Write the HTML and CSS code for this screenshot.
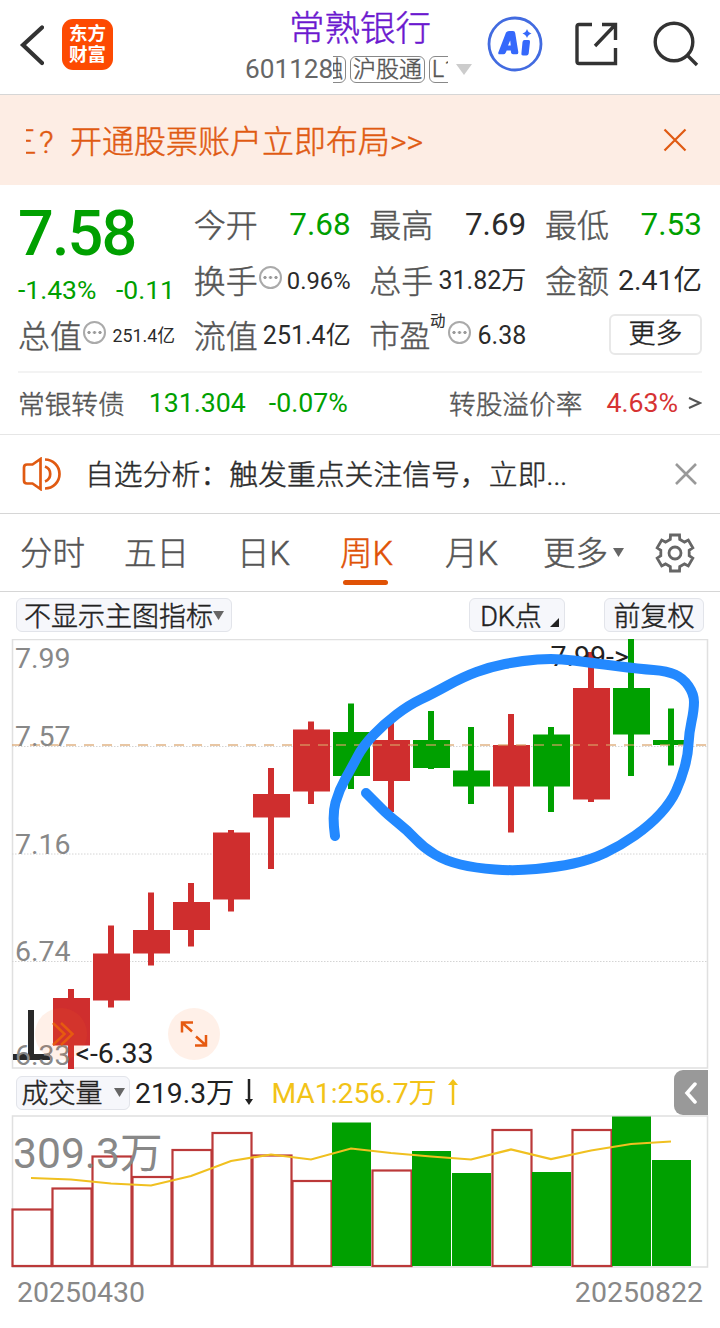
FILE: index.html
```html
<!DOCTYPE html>
<html lang="zh-CN">
<head>
    <meta charset="utf-8">
    <title>常熟银行 601128</title>
    <meta name="viewport" content="width=device-width, initial-scale=1">
    <link rel="stylesheet" href="styles.css">
</head>
<body>

    <header class="topbar">
        <div class="topleft">
            <svg class="back" width="26" height="44" viewBox="0 0 26 44"><path d="M24 4.500L5 22L24 40"/></svg>
            <div class="logo"><span>东方</span><span>财富</span></div>
        </div>
        <div class="stock">
            <div class="stockname">常熟银行</div>
            <div class="stockcode">
                <span class="code">601128</span>
                <div class="tags"><span class="tag cut">融</span><span class="tag">沪股通</span><span class="tag">L1</span></div>
                <svg width="16" height="11" viewBox="0 0 16 11"><path d="M0 0H16L8 11Z" fill="#ccc"/></svg>
            </div>
        </div>
        <div class="topicons">
            <svg width="56" height="56" viewBox="0 0 56 56">
                <circle cx="28" cy="28" r="26" fill="none" stroke="#426be0" stroke-width="2.8"/>
                <path fill="#3568fb" fill-rule="evenodd" d="M19 16.5Q20 15 22 15H26Q28 15 28.2 17L31.3 36Q31.5 38.3 29.5 38.3H26Q24.3 38.3 24 36.5L23.8 34.5H19.7L18.7 36.8Q18 38.3 16.3 38.3H13Q10.5 38.3 11.5 36ZM21 29.5H23.7L23.2 24.5Z"/>
                <path fill="#3568fb" d="M37.5 24H41.5Q43.4 24 43 26L41.7 37.5Q41.3 39.5 39.5 39.5H36Q34 39.5 34.4 37.5L35.5 26Q35.8 24 37.5 24ZM40 13Q41 16.5 44.5 17.5Q41 18.5 40 22Q39 18.5 35.5 17.5Q39 16.5 40 13Z"/>
            </svg>
            <svg class="line" width="46" height="46" viewBox="0 0 46 46">
                <path d="M18 3.500H5Q3 3.500 3 5.500V40.500Q3 42.500 5 42.500H41.500V27M28 3.500H41.500V19M41.500 3.500L21 25"/>
            </svg>
            <svg class="line" width="46" height="46" viewBox="0 0 46 46">
                <circle cx="21" cy="21" r="18.800"/><path d="M34 34L44 44"/>
            </svg>
        </div>
    </header>

    <div class="banner">
        <div class="marquee"><span class="slide">三</span><span class="ask">?</span>开通股票账户立即布局&gt;&gt;</div>
        <svg width="24" height="24" viewBox="0 0 24 24"><path d="M1.500 1.500L22.500 22.500M22.500 1.500L1.500 22.500"/></svg>
    </div>

    <section class="quote">
        <div class="grid">
            <div class="price">
                <div class="now">7.58</div>
                <div class="change"><span>-1.43%</span><span>-0.11</span></div>
            </div>
            <div class="cell"><label>今开</label><b class="v32 green">7.68</b></div>
            <div class="cell"><label>最高</label><b class="v32">7.69</b></div>
            <div class="cell"><label>最低</label><b class="v32 green">7.53</b></div>
            <div class="cell"><label>换手</label><i class="dots"></i><b class="v24">0.96%</b></div>
            <div class="cell"><label>总手</label><b class="v25">31.82万</b></div>
            <div class="cell"><label>金额</label><b class="v28">2.41亿</b></div>
            <div class="cell"><label>总值</label><i class="dots"></i><b class="v18">251.4亿</b></div>
            <div class="cell"><label>流值</label><b class="v25">251.4亿</b></div>
            <div class="cell"><label class="pe">市盈</label><small>动</small><i class="dots"></i><b class="v25">6.38</b></div>
            <div class="cell"><button class="more">更多</button></div>
        </div>
        <div class="bond">
            <span>常银转债</span>
            <span class="green num">131.304</span>
            <span class="green pct">-0.07%</span>
            <span class="rate">转股溢价率</span>
            <span class="red">4.63%</span>
            <svg width="14" height="14" viewBox="0 0 14 14"><path d="M1 2L12 7L1 12"/></svg>
        </div>
    </section>

    <div class="notice">
        <svg class="horn" width="40" height="34" viewBox="0 0 40 34">
            <path d="M18.500 2V32L10.500 26.500H5Q2 26.500 2 23.500V10.500Q2 7.500 5 7.500H10.500ZM23 9.500A8 8 0 0 1 23 24.500M23 2.500A14.500 14.500 0 0 1 23 31.500"/>
        </svg>
        <span>自选分析：触发重点关注信号，立即...</span>
        <svg class="close" width="22" height="22" viewBox="0 0 22 22"><path d="M1 1L21 21M21 1L1 21"/></svg>
    </div>

    <nav class="tabs">
        <span>分时</span>
        <span>五日</span>
        <span>日K</span>
        <span class="on">周K</span>
        <span>月K</span>
        <span>更多<svg class="arrow" width="11" height="9" viewBox="0 0 11 9"><path d="M0 0H11L5.500 9Z"/></svg></span>
        <svg class="gear" width="40" height="40" viewBox="0 0 40 40">
            <path id="gear"/>
            <circle cx="20" cy="20" r="6"/>
        </svg>
    </nav>

    <div class="chartbar">
        <div class="pill main"><span>不显示主图指标</span><svg class="arrow" width="11" height="9" viewBox="0 0 11 9"><path d="M0 0H11L5.500 9Z"/></svg></div>
        <div class="pill dk"><span>DK点</span><svg width="9" height="9" viewBox="0 0 9 9"><path d="M9 0V9H0Z" fill="#222"/></svg></div>
        <div class="pill fq"><span>前复权</span></div>
    </div>

    <!-- weekly candles -->
    <svg class="kline" width="720" height="431" viewBox="0 639 720 431">
        <path class="frame" d="M12.500 639.500H707.500V1068H12.500Z"/>
        <path class="dotted" d="M12 746.500H707M12 854H707M12 961.500H707"/>
        <g id="candles"></g>
        <path class="now-line" d="M12 745H707"/>
        <g class="scale">
            <text x="15" y="668">7.99</text>
            <text x="15" y="746">7.57</text>
            <text x="15" y="854">7.16</text>
            <text x="15" y="961">6.74</text>
            <text x="15" y="1064.500">6.33</text>
        </g>
        <text class="mark" x="550.500" y="665.500">7.99-&gt;</text>
        <text class="mark" x="75.500" y="1062.500">&lt;-6.33</text>
        <circle class="bubble" cx="61" cy="1034" r="26"/>
        <path class="orange" d="M53 1023L64.500 1034L53 1045M61 1023L72.500 1034L61 1045"/>
        <circle class="bubble" cx="194" cy="1034" r="26"/>
        <path class="orange" d="M182 1032.500V1022.500H193M182.500 1023L192 1031.500M195 1045.500H206V1035M205.500 1045L196 1036.500"/>
        <path id="pen"/>
    </svg>

    <div class="volbar">
        <div class="pill vol"><span>成交量</span><svg class="arrow" width="11" height="9" viewBox="0 0 11 9"><path d="M0 0H11L5.500 9Z"/></svg></div>
        <span class="amount">219.3万</span>
        <svg width="10" height="27" viewBox="0 0 10 27"><path d="M5 0V22" stroke="#222" stroke-width="2.500"/><path d="M1 20H9L5 26Z" fill="#222"/></svg>
        <span class="ma">MA1:256.7万</span>
        <svg width="10" height="27" viewBox="0 0 10 27"><path d="M5 4V26" stroke="#f2c318" stroke-width="2.500"/><path d="M0 6H10L5 0Z" fill="#f2c318"/></svg>
        <div class="fold"><svg width="14" height="22" viewBox="0 0 14 22"><path d="M11 2L3 11L11 20"/></svg></div>
    </div>

    <svg class="volume" width="720" height="154" viewBox="0 1115 720 154">
        <path class="frame" d="M12.500 1116H707.500V1267H12.500Z"/>
        <g id="bars"></g>
        <text class="peak" x="13" y="1168">309.3万</text>
        <polyline id="maline"/>
    </svg>

    <div class="dates"><span>20250430</span><span>20250822</span></div>

    <script>
        var RED = "#cf2e2e";
        var GREEN = "#00a000";

        // colour, high, top, bottom, low
        var candles = [
            ["#292929", 1010, 1054, 1060, 1058],
            [RED, 989, 998, 1045.5, 1069],
            [RED, 925.5, 953.5, 1000.5, 1007.5],
            [RED, 892.5, 930, 953.5, 965.5],
            [RED, 883, 902, 930, 946.5],
            [RED, 830, 832.5, 899.5, 911.5],
            [RED, 768, 794, 817.5, 869],
            [RED, 721.5, 729.5, 791.5, 804],
            [GREEN, 703.5, 732, 776, 789],
            [RED, 716.5, 740, 781, 812],
            [GREEN, 711, 740, 768, 769],
            [GREEN, 727, 770.5, 786.5, 804],
            [RED, 714, 745, 786.5, 832.5],
            [GREEN, 727, 734.5, 786.5, 812],
            [RED, 652, 688, 799.5, 802],
            [GREEN, 639, 688, 734.5, 776],
            [GREEN, 708.5, 740, 745, 765.5]
        ];
        var tops = [1209.5, 1188.5, 1156.5, 1177, 1150, 1133, 1155.5, 1181, 1122.5, 1170.5, 1151, 1173, 1130, 1172, 1130, 1116.5, 1160];
        var ma = [1178, 1179.5, 1183.5, 1185.5, 1176, 1161, 1154.5, 1159.5, 1148.5, 1153, 1156.5, 1159.5, 1149.5, 1159, 1150.5, 1144, 1141.5];

        var out = "", vol = "", line = "";
        for (var i = 0; i < candles.length; i++) {
            var c = candles[i];
            var x = 31 + i * 40;
            out += "<rect x='" + (x - 3) + "' y='" + c[1] + "' width='6' height='" + (c[4] - c[1]) + "' fill='" + c[0] + "'/>";
            out += "<rect x='" + (x - 18) + "' y='" + c[2] + "' width='37' height='" + (c[3] - c[2]) + "' fill='" + c[0] + "'/>";

            if (c[0] == GREEN) {
                vol += "<rect x='" + (x - 19) + "' y='" + tops[i] + "' width='39' height='" + (1266 - tops[i]) + "' fill='" + GREEN + "'/>";
            } else {
                vol += "<rect class='hollow' x='" + (x - 18.5) + "' y='" + tops[i] + "' width='39' height='" + (1266 - tops[i]) + "'/>";
            }
            line += x + "," + ma[i] + " ";
        }
        document.getElementById("candles").innerHTML = out;
        document.getElementById("bars").innerHTML = vol;
        document.getElementById("maline").setAttribute("points", line);

        // freehand circle, smoothed through the midpoints
        var pen = [[335, 836], [332, 815], [339, 790], [352, 767], [363, 746], [384, 724], [409, 705], [432, 694], [463, 677], [490, 667],
            [520, 661], [555, 658], [592, 663], [640, 669], [667, 671], [683, 678], [694, 694], [694, 710], [689, 733], [688, 755],
            [681, 780], [671, 802], [650, 825], [620, 846], [590, 860], [557, 867], [515, 871], [475, 868], [446, 861], [424, 848], [407, 830], [388, 815], [376, 803], [366, 793]];
        var d = "M" + pen[0];
        for (i = 1; i < pen.length - 1; i++) {
            d += "Q" + pen[i] + " " + (pen[i][0] + pen[i + 1][0]) / 2 + "," + (pen[i][1] + pen[i + 1][1]) / 2;
        }
        document.getElementById("pen").setAttribute("d", d + "L" + pen[pen.length - 1]);

        // settings gear, six teeth
        var g = "";
        for (i = 0; i < 6; i++) {
            [[-14, 18.5], [14, 18.5], [19, 14.5], [41, 14.5]].forEach(function (p) {
                var a = (i * 60 + p[0] - 90) * Math.PI / 180;
                g += (g ? "L" : "M") + (20 + p[1] * Math.cos(a)).toFixed(1) + " " + (20 + p[1] * Math.sin(a)).toFixed(1);
            });
        }
        document.getElementById("gear").setAttribute("d", g + "Z");
    </script>
</body>
</html>
```
FILE: styles.css
```css
* {
    box-sizing: border-box;
}
body {
    margin: 0;
    width: 720px;
    height: 1328px;
    overflow: hidden;
    background-color: #fff;
    font-family: Roboto, "Noto Sans CJK SC", sans-serif;
    color: #2b2b2b;
    white-space: nowrap;
}
svg {
    display: block;
    flex: none;
    fill: none;
}
.green { color: #00a000; }
.red { color: #d63333; }

/* light face is a bit too thin, thicken it slightly */
.stockname, .tag, .marquee, .cell label, .cell small, .more, .bond, .notice span, .tabs span, .pill {
    font-weight: 300;
    -webkit-text-stroke: .45px;
}

/* top bar */
.topbar {
    height: 95px;
    display: flex;
    border-bottom: 1px solid #d6d6d6;
}
.topleft {
    width: 245px;
    height: 89px;
    padding-left: 18px;
    display: flex;
    align-items: center;
    gap: 18px;
}
.back path {
    stroke: #333;
    stroke-width: 4.2;
    stroke-linecap: round;
}
.logo {
    width: 51px;
    height: 51px;
    border-radius: 11px;
    background-color: #fd4a02;
    color: #fff;
    font-weight: 700;
    font-size: 18.5px;
    line-height: 21px;
    display: flex;
    flex-direction: column;
    align-items: center;
    justify-content: center;
}
.stock {
    width: 227px;
}
.stockname {
    height: 54px;
    padding-left: 44px;
    font-size: 35.5px;
    line-height: 59px;
    color: #6b18cf;
}
.stockcode {
    height: 30px;
    display: flex;
    align-items: center;
}
.code {
    font-size: 26.2px;
    color: #666;
    width: 88px;
}
.tags {
    width: 115px;
    margin-right: 8px;
    overflow: hidden;
    display: flex;
    gap: 4px;
}
.tag {
    flex: none;
    height: 27px;
    padding: 0 2px;
    border: 1.5px solid #888;
    border-radius: 6px;
    font-size: 23px;
    line-height: 25px;
    color: #555;
}
.cut {
    margin-left: -16px;
}
.topicons {
    height: 88px;
    padding-left: 15px;
    display: flex;
    align-items: center;
    gap: 32px;
}
.line {
    stroke: #333;
    stroke-width: 3.4;
}
.topicons .line:nth-child(2) {
    margin: 0 1px 0 -1px;
}

/* ad banner */
.banner {
    height: 90px;
    background-color: #fdede4;
    padding: 0 33px 0 26px;
    display: flex;
    align-items: center;
    justify-content: space-between;
    color: #e05a12;
    font-size: 32px;
    line-height: 46px;
}
.marquee {
    overflow: hidden;
    margin-top: 4px;
}
.slide {
    margin-left: -21px;
}
.ask {
    display: inline-block;
    width: 33px;
    padding-left: 2px;
}
.banner path {
    stroke: #e05a12;
    stroke-width: 2.2;
}

/* quote */
.quote {
    height: 250px;
    padding: 11px 18px 0;
    border-bottom: 1px solid #e6e6e6;
}
.grid {
    height: 177px;
    display: grid;
    grid-template-columns: repeat(4, 157px);
    grid-template-rows: 56px 56px 54px;
    column-gap: 18.67px;
    border-bottom: 2px solid #f3f3f3;
}
.price {
    grid-row: span 2;
    color: #00a000;
}
.now {
    font-size: 63px;
    line-height: 76px;
    font-weight: 500;
    letter-spacing: -1.9px;
}
.change {
    display: flex;
    justify-content: space-between;
    font-size: 26.5px;
    line-height: 35px;
}
.cell {
    display: flex;
    align-items: center;
    line-height: 56px;
}
.cell label {
    font-size: 32px;
    color: #555;
    padding-top: 3px;
}
.cell .pe {
    font-size: 30.5px;
}
.cell small {
    font-size: 15px;
    line-height: 16px;
    align-self: flex-start;
    margin-top: 5px;
    margin-right: 2px;
}
.cell b {
    margin-left: auto;
    padding-top: 1px;
    font-weight: 400;
}
.v32 { font-size: 31.5px; }
.v28 { font-size: 28.5px; }
.v25 { font-size: 25px; }
.v24 { font-size: 23.8px; }
.v18 { font-size: 17.8px; }
.dots {
    width: 23px;
    height: 23px;
    margin-top: -5px;
    margin-left: 1px;
    border: 2px solid #aaa;
    border-radius: 50%;
    background: radial-gradient(circle, #999 1.3px, transparent 1.8px) 50% 50% / 5.5px 19px;
    background-clip: content-box;
    padding: 0 1px;
    flex: none;
}
.more {
    width: 93px;
    height: 41px;
    margin-left: auto;
    margin-top: -2px;
    padding: 0;
    border: 2px solid #e8e8e8;
    border-radius: 6px;
    background-color: #fff;
    font-family: inherit;
    font-size: 27px;
    line-height: 37px;
    color: #222;
}
.bond {
    height: 59px;
    display: flex;
    align-items: center;
    font-size: 26.7px;
    color: #555;
}
.bond .green, .bond .red {
    font-weight: 400;
    -webkit-text-stroke: 0;
}
.num { margin-left: 24px; }
.pct { margin-left: 23px; }
.rate {
    margin-left: auto;
    margin-right: 24px;
}
.bond svg {
    margin-left: 10px;
    stroke: #555;
    stroke-width: 2;
}

/* notice */
.notice {
    height: 79px;
    padding: 0 23px 0 22px;
    border-bottom: 1px solid #d6d6d6;
    display: flex;
    align-items: center;
    font-size: 28.85px;
}
.notice span {
    margin-left: 23px;
    margin-top: -4px;
}
.horn {
    stroke: #e05a12;
    stroke-width: 2.7;
}
.close {
    margin-left: auto;
    stroke: #999;
    stroke-width: 2.6;
}

/* period tabs */
.tabs {
    height: 78px;
    padding-left: 20px;
    border-bottom: 1px solid #d6d6d6;
    display: grid;
    grid-template-columns: 104px 113px 103px 105px 98px 112px 1fr;
    align-items: center;
    font-size: 32.5px;
    color: #555;
}
.tabs span {
    height: 77px;
    line-height: 81px;
}
.tabs .on {
    color: #e05206;
}
.tabs .on::after {
    content: "";
    display: block;
    width: 45px;
    height: 5px;
    margin: -15px 0 0 3px;
    border-radius: 3px;
    background-color: #e05206;
}
.arrow {
    display: inline-block;
    fill: #666;
}
.tabs .arrow {
    margin-left: 5px;
    vertical-align: 8px;
}
.gear {
    stroke: #666;
    stroke-width: 2.8;
}

/* chart tool bars */
.chartbar {
    height: 47px;
    padding: 6px 16px 0;
    display: flex;
}
.pill {
    height: 34px;
    border: 1.5px solid #e2e4ea;
    border-radius: 6px;
    background-color: #f6f7fb;
    font-size: 27px;
    line-height: 32px;
    color: #222;
    display: flex;
    align-items: center;
    justify-content: center;
}
.pill span {
    padding-top: 3px;
}
.main {
    width: 216px;
}
.dk {
    width: 96px;
    margin-left: auto;
    margin-right: 39px;
    padding-left: 5px;
}
.dk svg {
    margin-left: 8px;
    margin-top: 15px;
}
.fq {
    width: 100px;
}
.frame {
    stroke: #e0e0e0;
    stroke-width: 1.5;
}
.dotted {
    stroke: #d4d4d4;
    stroke-width: 1;
    stroke-dasharray: 1.5 1.5;
}
.now-line {
    stroke: #d9a066;
    stroke-opacity: .6;
    stroke-width: 2;
    stroke-dasharray: 10 8;
}
.scale, .mark {
    font-size: 28.5px;
    fill: #888;
}
.mark {
    fill: #222;
}
.bubble {
    fill: #ff6a1a;
    fill-opacity: .1;
}
.orange {
    stroke: #e65a10;
    stroke-width: 2.5;
}
#pen {
    stroke: #2389ff;
    stroke-width: 10;
    stroke-linecap: round;
    stroke-linejoin: round;
}
.volbar {
    height: 45px;
    padding-left: 16px;
    padding-right: 12px;
    display: flex;
    align-items: center;
    font-size: 28.3px;
}
.vol {
    width: 114px;
}
.vol .arrow {
    margin-left: 11px;
}
.amount {
    margin: -4px 10px 0 5px;
    color: #222;
}
.ma {
    margin: -4px 11px 0 17px;
    color: #f2c318;
}
.fold {
    width: 34px;
    height: 45px;
    margin-left: auto;
    border-radius: 9px 0 0 9px;
    background-color: #999;
    display: flex;
    align-items: center;
    justify-content: center;
}
.fold path {
    stroke: #fff;
    stroke-width: 3.5;
    stroke-linecap: round;
}
.hollow {
    stroke: #bb3939;
    stroke-width: 2.2;
}
.peak {
    font-size: 42.6px;
    fill: #888;
}
#maline {
    stroke: #f0c020;
    stroke-width: 2.2;
}
.dates {
    padding: 0 17px 0 17px;
    display: flex;
    justify-content: space-between;
    font-size: 28.5px;
    line-height: 48px;
    color: #888;
}
```
